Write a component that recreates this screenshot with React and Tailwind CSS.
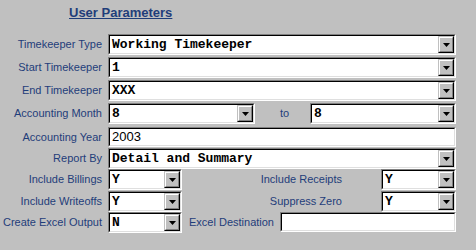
import React from 'react';

const Arrow = () => (
    <div className="flex h-full w-[16px] border border-t-[#c0c0c0] border-l-[#c0c0c0] border-b-black border-r-black">
        <div className="flex flex-1 items-center justify-center border border-t-white border-l-white border-b-[#808080] border-r-[#808080] bg-[#c0c0c0]">
            <svg width="7" height="4" viewBox="0 0 7 4">
                <polygon points="0,0 7,0 3.5,4" fill="#000" />
            </svg>
        </div>
    </div>
);

const Sunken = ({ className, children }) => (
    <div className={`flex border border-t-[#808080] border-l-[#808080] border-b-white border-r-white ${className}`}>
        <div className="flex flex-1 min-w-0 border border-t-black border-l-black border-b-[#dfdfdf] border-r-[#dfdfdf] bg-white">
            {children}
        </div>
    </div>
);

const Select = ({ value, className }) => (
    <Sunken className={`h-[21px] ${className}`}>
        <span className="flex-1 min-w-0 overflow-hidden whitespace-pre pl-[2px] text-[13px] leading-[17px] font-bold text-black font-['Liberation_Mono','Courier_New',monospace]">
            {value}
        </span>
        <Arrow />
    </Sunken>
);

const TextInput = ({ value, className }) => (
    <Sunken className={`h-[20px] ${className}`}>
        <span className="flex-1 pl-[2px] text-[13px] leading-[16px] text-black">{value}</span>
    </Sunken>
);

const Label = ({ children, className = 'w-[102px]' }) => (
    <div className={`shrink-0 text-right text-[11px] leading-[21px] text-[#1f3d7a] ${className}`}>
        {children}
    </div>
);

const Row = ({ label, h, children }) => (
    <div className={`flex items-start ${h}`}>
        <Label>{label}</Label>
        <div className="ml-[6px] flex flex-1 items-start">{children}</div>
    </div>
);

export default function App() {
    return (
        <div className="h-[250px] w-[476px] bg-[#c0c0c0] font-['Liberation_Sans',Arial,sans-serif]">
            <div className="pl-[69px] pt-[5px] text-[13px] leading-[15px] font-bold text-[#1f3d7a] underline">
                User Parameters
            </div>
            <div className="mt-[14px] w-[456px]">
                <Row label="Timekeeper Type" h="h-[23px]">
                    <Select value="Working Timekeeper" className="flex-1" />
                </Row>
                <Row label="Start Timekeeper" h="h-[23px]">
                    <Select value="1" className="flex-1" />
                </Row>
                <Row label="End Timekeeper" h="h-[23px]">
                    <Select value="XXX" className="flex-1" />
                </Row>
                <Row label="Accounting Month" h="h-[24px]">
                    <Select value="8" className="w-[147px]" />
                    <div className="w-[55px] pl-[4px] text-center text-[11px] leading-[21px] text-[#1f3d7a]">to</div>
                    <Select value="8" className="flex-1" />
                </Row>
                <Row label="Accounting Year" h="h-[21px]">
                    <TextInput value="2003" className="flex-1" />
                </Row>
                <Row label="Report By" h="h-[21px]">
                    <Select value="Detail and Summary" className="flex-1" />
                </Row>
                <Row label="Include Billings" h="h-[22px]">
                    <Select value="Y" className="w-[74px]" />
                    <Label className="w-[160px]">Include Receipts</Label>
                    <Select value="Y" className="ml-[39px] flex-1" />
                </Row>
                <Row label="Include Writeoffs" h="h-[21px]">
                    <Select value="Y" className="w-[74px]" />
                    <Label className="w-[160px]">Suppress Zero</Label>
                    <Select value="Y" className="ml-[39px] flex-1" />
                </Row>
                <Row label="Create Excel Output" h="h-[21px]">
                    <Select value="N" className="w-[74px]" />
                    <Label className="w-[92px]">Excel Destination</Label>
                    <TextInput value="" className="ml-[6px] flex-1" />
                </Row>
            </div>
        </div>
    );
}
